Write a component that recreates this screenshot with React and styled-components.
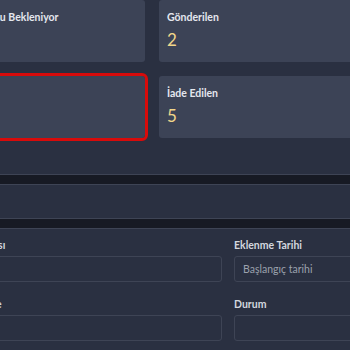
import styled, { createGlobalStyle } from 'styled-components';

const GlobalStyle = createGlobalStyle`
  body {
    margin: 0;
    background: #2a3041;
    font-family: Lato, "Noto Sans", sans-serif;
    overflow: hidden;
  }
`;

const Page = styled.div`
  margin-left: -71px;
  width: 620px;
`;

const StatGrid = styled.div`
  display: grid;
  grid-template-columns: 216px 208px;
  gap: 14px;
`;

const StatCard = styled.div`
  box-sizing: border-box;
  height: 62px;
  padding: 10px 8px 0;
  background: #3c4356;
  border-radius: 3px;
  outline: ${(p) => (p.$selected ? '3px solid #d80b0b' : 'none')};
`;

const StatTitle = styled.div`
  font-size: 10.5px;
  font-weight: 700;
  line-height: 14px;
  color: #e4e7ee;
  white-space: nowrap;
`;

const StatValue = styled.div`
  margin-top: 6px;
  font-size: 17px;
  line-height: 20px;
  color: #f1d68a;
`;

const Divider = styled.div`
  height: 9px;
  background: #171a24;
  border-top: 1px solid #3e4455;
  border-bottom: 1px solid #3e4455;
  margin-top: ${(p) => p.$top || 0}px;
`;

const HeaderBar = styled.div`
  height: 33px;
  background: #2a3041;
`;

const FilterPanel = styled.div`
  padding: 9px 12px 20px;
  background: #2a3041;
`;

const FilterGrid = styled.div`
  display: grid;
  grid-template-columns: 281px 281px;
  column-gap: 12px;
  row-gap: 15px;
`;

const Field = styled.div`
  display: flex;
  flex-direction: column;
  gap: 4px;
`;

const Label = styled.label`
  font-size: 10.5px;
  font-weight: 700;
  line-height: 14px;
  color: #d3d7df;
  white-space: nowrap;
`;

const Input = styled.input`
  box-sizing: border-box;
  height: 26px;
  padding: 0 8px;
  background: #2a3041;
  border: 1px solid #3e4455;
  border-radius: 3px;
  font-family: inherit;
  font-size: 10.5px;
  color: #e4e7ee;
  outline: none;

  &::placeholder {
    color: #9ba1ad;
  }
`;

const stats = [
  { id: 1, title: 'Kargo Durumu Bekleniyor', value: 4 },
  { id: 2, title: 'Gönderilen', value: 2 },
  { id: 3, title: 'İptal', value: 0, selected: true },
  { id: 4, title: 'İade Edilen', value: 5 },
];

const App = () => {
  return (
    <>
      <GlobalStyle />
      <Page>
        <StatGrid>
          {stats.map((s) => (
            <StatCard key={s.id} $selected={s.selected}>
              <StatTitle>{s.title}</StatTitle>
              <StatValue>{s.value}</StatValue>
            </StatCard>
          ))}
        </StatGrid>

        <Divider $top={36} />
        <HeaderBar />
        <Divider />

        <FilterPanel>
          <FilterGrid>
            <Field>
              <Label>Kargo Firması</Label>
              <Input />
            </Field>
            <Field>
              <Label>Eklenme Tarihi</Label>
              <Input placeholder="Başlangıç tarihi" />
            </Field>
            <Field>
              <Label>Köy veya İlçe</Label>
              <Input />
            </Field>
            <Field>
              <Label>Durum</Label>
              <Input />
            </Field>
          </FilterGrid>
        </FilterPanel>
      </Page>
    </>
  );
};

export default App;
